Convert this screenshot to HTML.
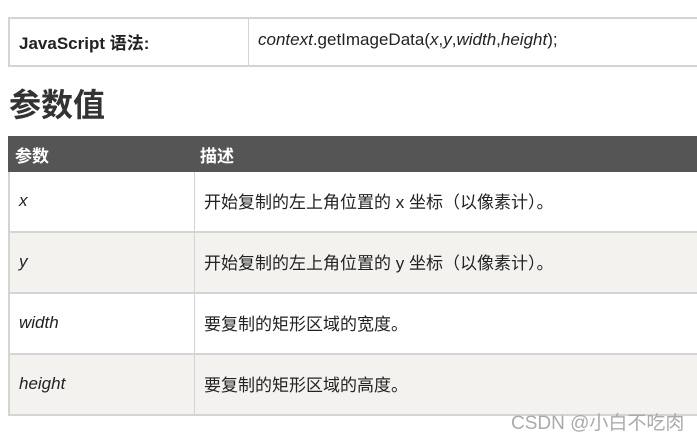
<!DOCTYPE html>
<html><head><meta charset="utf-8"><style>
body{margin:0;width:697px;height:440px;overflow:hidden;background:#fff;font-family:"Liberation Sans","Noto Sans CJK SC",sans-serif;color:#222;position:relative}
.a{position:absolute}
.t1{left:8px;top:17px;width:700px;height:46px;border:2px solid #d4d4d4;border-right:none}
.t1 .d{left:238px;top:0;width:1px;height:46px;background:#d4d4d4}
h1{position:absolute;left:9px;top:80px;margin:0;font-size:32px;font-weight:bold;color:#333}
.hd{left:8px;top:136px;width:700px;height:36px;background:#555;color:#fff;font-weight:bold;font-size:17px}
.row{left:8px;width:700px;height:59px;border-left:2px solid #d4d4d4;border-bottom:2px solid #d4d4d4;font-size:17px}
.row i{position:absolute;left:9px;top:19px}
.row span{position:absolute;left:194px;top:16px}
.row .d{position:absolute;left:184px;top:0;width:1px;height:59px;background:#d4d4d4}
</style></head><body>
<div class="a t1"><div class="a d"></div>
<div class="a" style="left:9px;top:10px;font-size:17px;font-weight:bold">JavaScript 语法:</div>
<div class="a" style="left:248px;top:11px;font-size:17px"><i>context</i>.getImageData(<i>x</i>,<i>y</i>,<i>width</i>,<i>height</i>);</div>
</div>
<h1>参数值</h1>
<div class="a hd"><span class="a" style="left:7px;top:6px">参数</span><span class="a" style="left:192px;top:6px">描述</span></div>
<div class="a row" style="top:172px;background:#fff"><div class="d"></div><i>x</i><span>开始复制的左上角位置的 x 坐标（以像素计）。</span></div>
<div class="a row" style="top:233px;background:#f3f2ef"><div class="d"></div><i>y</i><span>开始复制的左上角位置的 y 坐标（以像素计）。</span></div>
<div class="a row" style="top:294px;background:#fff"><div class="d"></div><i>width</i><span>要复制的矩形区域的宽度。</span></div>
<div class="a row" style="top:355px;background:#f3f2ef"><div class="d"></div><i>height</i><span>要复制的矩形区域的高度。</span></div>
<div class="a" style="left:511px;top:408px;font-size:19px;color:#aaa">CSDN @小白不吃肉</div>
</body></html>
